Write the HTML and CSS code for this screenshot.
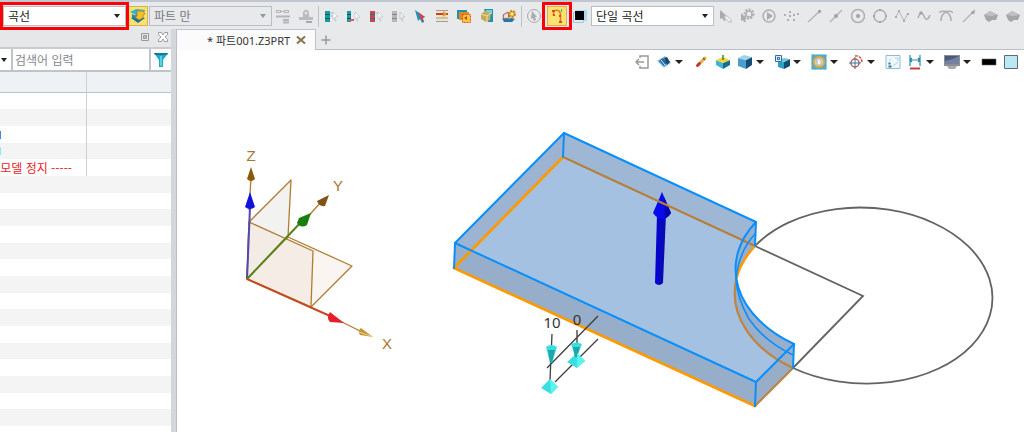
FILE: index.html
```html
<!DOCTYPE html>
<html lang="ko">
<head>
  <meta charset="UTF-8">
  <meta name="viewport" content="width=device-width, initial-scale=1.0">
  <title>파트001.Z3PRT</title>
  <link rel="stylesheet" href="styles.css">
</head>
<body>
  <header class="toolbar">
    <div class="marked">
      <div class="combo">
        <select aria-label="필터"><option>곡선</option></select>
      </div>
    </div>
    <button class="tool active first" aria-label="형상 필터">
      <svg viewBox="0 0 16 16"><path d="M1 10l5-3 9 3-7 5z" fill="#1673a8"/><path d="M0 4l6-3 9 1-1 3-6 3z" fill="#31b3d6"/><path d="M2 6l4 2v3l-4-2z" fill="#2186b3"/><path d="M7 3l6 0 2 3-2 1v3l-4 2-4-3 2-1z" fill="#f9bf20" stroke="#9b7415" stroke-width=".6"/></svg>
    </button>
    <div class="combo disabled">
      <select aria-label="범위" disabled><option>파트 만</option></select>
    </div>
    <div class="group pair">
      <button class="tool" aria-label="링크"><svg viewBox="0 0 16 16" fill="none" stroke="#b3b5b8"><rect x="1.500" y="2.500" width="4" height="2"/><rect x="9.500" y="2.500" width="4" height="2"/><path d="M5 3.500h5"/><path d="M1 8.500h14M8 12h6M8 14.500h6" stroke-width="1.800"/></svg></button>
      <button class="tool" aria-label="스탬프"><svg viewBox="0 0 16 16" fill="#b9bbbe"><path d="M1 9h4V4q3-5 6 0v5h4v3H1z"/><path d="M8 13h6v2H8z" fill="#a6a8ab"/><circle cx="8" cy="5" r="1.500" fill="#e0e1e3"/></svg></button>
    </div>
    <span class="sep"></span>
    <div class="group picks">
      <button class="tool" aria-label="목록 선택"><svg viewBox="0 0 16 16"><path d="M2 3h5v3H2zM2 7h5v3H2zM2 11h5v3H2z" fill="#159da5"/><path d="M2 6.500h5M2 10.500h5" stroke="#17505d"/><path d="M7 5h4M7 8h3" stroke="#8bcdb0"/><path d="M10 4l5 5-3 0 1 4-1 0-1-3-1 1z" fill="#fff" stroke="#b3c1cb" stroke-width=".7"/></svg></button>
      <button class="tool" aria-label="목록 추가"><svg viewBox="0 0 16 16"><path d="M2 3h4v3H2zM2 7h4v3H2zM2 11h4v3H2z" fill="#159da5"/><path d="M2 6.500h4M2 10.500h4" stroke="#17505d"/><path d="M4 12h5" stroke="#df5858" stroke-width="2"/><path d="M10 4l5 5-3 0 1 4-1 0-1-3-1 1z" fill="#fff" stroke="#b3c1cb" stroke-width=".7"/></svg></button>
      <button class="tool" aria-label="목록 제거"><svg viewBox="0 0 16 16"><path d="M2 3h5v3H2zM2 7h5v3H2zM2 11h5v3H2z" fill="#c8464f"/><path d="M2 6.500h5M2 10.500h5" stroke="#1c7480"/><path d="M7 5h3" stroke="#8bcdb0"/><path d="M10 4l5 5-3 0 1 4-1 0-1-3-1 1z" fill="#fff" stroke="#b3c1cb" stroke-width=".7"/></svg></button>
      <button class="tool" aria-label="목록 지우기"><svg viewBox="0 0 16 16"><path d="M2 3h5v3H2zM2 7h5v3H2zM2 11h5v3H2z" fill="#b5b7ba"/><path d="M2 6.500h5M2 10.500h5" stroke="#85878a"/><path d="M10 4l5 5-3 0 1 4-1 0-1-3-1 1z" fill="#f2f2f2" stroke="#bbb" stroke-width=".7"/></svg></button>
      <button class="tool" aria-label="선택"><svg viewBox="0 0 16 16"><path d="M3 2l3 11 2-2 2 4 2-1-1-4 2-1z" fill="#1698bb"/><path d="M6 4l7 5-3 1 2 4-1 0-3-4z" fill="#dc3e48"/></svg></button>
      <button class="tool" aria-label="속성 선택"><svg viewBox="0 0 16 16"><path d="M2 2h12v12H2z" fill="#efe4c8"/><path d="M2 2.500h12M2 13.500h12M2 10h12" stroke="#a09e98"/><path d="M2 6h12" stroke="#cf3b2c" stroke-width="2"/><path d="M9 3l4 3-4 3z" fill="#d99a22"/></svg></button>
      <button class="tool" aria-label="면 선택"><svg viewBox="0 0 16 16"><path d="M1 2h10v9H1z" fill="#1b91b5"/><path d="M3 4h10v8H3z" fill="#e08a1e"/><path d="M6.500 6.500h8v8h-8z" fill="#fbc53a" stroke="#d5572c" stroke-dasharray="2 1"/><path d="M8 10l3-2v4z" fill="#c93d26"/></svg></button>
      <button class="tool" aria-label="솔리드 선택"><svg viewBox="0 0 16 16"><path d="M5 1h9v13H9z" fill="#1e91b4"/><path d="M7 2h6v4H7z" fill="#7fd0dd"/><path d="M2 6l4-3 6 2-1 7-4 2-5-3z" fill="#c3ad58"/><path d="M2 6l6 2 4-3M8 8v6" stroke="#ece0a1" fill="none"/></svg></button>
      <button class="tool" aria-label="스케치 설정"><svg viewBox="0 0 16 16"><path d="M1 10q5 2 9 0l4 1-3 3H3z" fill="#2578a1"/><path d="M2 7l5-3 1 6-5 1z" fill="#e3e0e2" stroke="#a05a55"/><circle cx="11" cy="6" r="3" fill="#f0bb3d" stroke="#cb8317" stroke-width="2" stroke-dasharray="2 1"/><circle cx="11" cy="6" r="1" fill="#fff"/></svg></button>
    </div>
    <span class="sep"></span>
    <button class="tool" aria-label="픽"><svg viewBox="0 0 16 16"><circle cx="8" cy="8" r="6.500" fill="none" stroke="#a9abae"/><path d="M6 3l5 6-2 0 1 3-2 1-1-3-2 1z" fill="#a9abae"/></svg></button>
    <div class="marked tight">
      <button class="tool active" aria-label="연결 곡선"><svg viewBox="0 0 16 16"><path d="M4.500 8V3.500Q11 0 11.500 7V14" fill="none" stroke="#dd7b25" stroke-width="1.500"/><path d="M3 2h3v2H3zM4 6h2v2H4zM10 13h3v2h-3zM10 7h2v2h-2z" fill="#d3502b"/><path d="M12.500 1v3" stroke="#3fae91"/></svg></button>
    </div>
    <button class="tool swatch" aria-label="색상"><svg viewBox="0 0 16 16"><path d="M4 2h11v11H4z" fill="#a8dcf4"/><path d="M1.500 4.500h10v10h-10z" fill="#d6effa" stroke="#a1c8df"/><path d="M3 3h9v9H3z"/></svg></button>
    <div class="combo">
      <select aria-label="선택 방식"><option>단일 곡선</option></select>
    </div>
    <div class="group snaps">
      <button class="tool" aria-label="지우개"><svg viewBox="0 0 16 16"><path d="M3 2l7 6-3 1 2 3-2 1-2-3-2 1z" fill="#a9abae"/><path d="M9 9l4 4" stroke="#c9cbce" stroke-width="4" stroke-linecap="round"/><path d="M9 9l4 4" stroke="#f3f3f3" stroke-width="2"/></svg></button>
      <button class="tool" aria-label="스냅 설정"><svg viewBox="0 0 16 16"><circle cx="10" cy="6" r="4" fill="none" stroke="#b0b2b5" stroke-width="3" stroke-dasharray="2 1"/><circle cx="10" cy="6" r="3" fill="none" stroke="#a9abae"/><path d="M2 5l6 6-2 0 1 3-2 0-1-2-2 1z" fill="#a9abae"/></svg></button>
      <button class="tool" aria-label="실행"><svg viewBox="0 0 16 16"><circle cx="8" cy="8" r="6" fill="none" stroke="#aeb0b3" stroke-width="1.500"/><path d="M6 4l6 4-6 4z" fill="#a9abae"/></svg></button>
      <button class="tool" aria-label="점"><svg viewBox="0 0 16 16" fill="#adafb2"><path d="M1 6h2v2H1zM6 3h2v2H6zM6 7h2v2H6zM4 11h2v2H4zM10 11h2v2h-2zM10 6h2v2h-2zM14 5h2v2h-2z"/></svg></button>
      <button class="tool" aria-label="끝점"><svg viewBox="0 0 16 16"><path d="M2 14L14 3" stroke="#b3b5b8" stroke-width="1.500"/><circle cx="13.500" cy="3.500" r="1.700" fill="#a1a3a6"/></svg></button>
      <button class="tool" aria-label="중간점"><svg viewBox="0 0 16 16"><path d="M2 14L14 2" stroke="#b3b5b8" stroke-width="1.500"/><circle cx="8" cy="8" r="2" fill="#a1a3a6"/></svg></button>
      <button class="tool" aria-label="중심"><svg viewBox="0 0 16 16"><circle cx="8" cy="8" r="6.500" fill="none" stroke="#adafb2" stroke-width="1.500"/><circle cx="8" cy="8" r="2" fill="#a1a3a6"/></svg></button>
      <button class="tool" aria-label="사분점"><svg viewBox="0 0 16 16"><circle cx="8" cy="8" r="6" fill="none" stroke="#adafb2" stroke-width="1.500"/><path d="M7 1h2v2H7zM7 13h2v2H7zM1 7h2v2H1zM13 7h2v2h-2z" fill="#a1a3a6"/></svg></button>
      <button class="tool" aria-label="제어점"><svg viewBox="0 0 16 16"><path d="M2 9l3-6 5 10 4-8" fill="none" stroke="#b3b5b8"/><path d="M4 2h2v2H4zM9 12h2v2H9zM1 8h2v2H1zM13 5h2v2h-2z" fill="#a9abae"/></svg></button>
      <button class="tool" aria-label="곡선점"><svg viewBox="0 0 16 16"><path d="M2 10Q5 1 8 8T14 7" fill="none" stroke="#adafb2" stroke-width="1.500"/><circle cx="5" cy="5" r="1.700" fill="#a1a3a6"/></svg></button>
      <button class="tool" aria-label="접점"><svg viewBox="0 0 16 16"><path d="M1 4.500q3-2 7-1 4-1 7 1M3 13q0-7 5-9 5 2 5 9" fill="none" stroke="#adafb2" stroke-width="1.500"/></svg></button>
      <button class="tool" aria-label="선상점"><svg viewBox="0 0 16 16"><path d="M2 14L14 2" stroke="#b3b5b8" stroke-width="1.500"/><circle cx="12" cy="4.500" r="1.700" fill="#a1a3a6"/></svg></button>
      <button class="tool" aria-label="면 위"><svg viewBox="0 0 16 16"><path d="M1 7l6-4 8 4-2 5-4 0-3 2-3-2z" fill="#a4a6a9"/><path d="M2 7l5-4 7 4-6 1z" fill="#bfc1c4"/></svg></button>
      <button class="tool" aria-label="면 교차"><svg viewBox="0 0 16 16"><path d="M1 7l6-4 8 4-2 5-4 0-3 2-3-2z" fill="#a4a6a9"/><path d="M2 7l5-4 7 4-6 1z" fill="#bfc1c4"/></svg></button>
    </div>
  </header>

  <div class="workspace">
    <aside class="manager">
      <div class="manager-title">
        <button aria-label="고정"><svg viewBox="0 0 10 10" fill="none" stroke="#96999d"><path d="M1.500 1.500h7v7h-7zM3.500 3.500h3v3h-3zM3 5h4"/></svg></button>
        <button aria-label="닫기"><svg viewBox="0 0 10 10" fill="#fff" stroke="#85888c" stroke-width=".8"><path d="M.5.5h3L5 3 6.500.5h3v2L7 5l2.500 2.500v2h-3L5 7 3.500 9.500h-3v-2L3 5 .5 2.500z"/></svg></button>
      </div>
      <div class="search">
        <button class="search-type" aria-label="검색 유형"></button>
        <input type="text" placeholder="검색어 입력" aria-label="검색어 입력">
        <button class="filter" aria-label="필터"><svg viewBox="0 0 16 16"><path d="M1 1h14L10 8v7H6V8z" fill="#1ba9cd"/><path d="M1 1h14l-1 2H2z" fill="#147898"/><path d="M8 4v10" stroke="#5cd0e5" stroke-width="2"/></svg></button>
      </div>
      <table class="history">
        <thead><tr><th></th><th></th></tr></thead>
        <tbody>
          <tr><td></td><td></td></tr>
          <tr><td></td><td></td></tr>
          <tr><td><i class="tag sketch"></i></td><td></td></tr>
          <tr><td><i class="tag extrude"></i></td><td></td></tr>
          <tr><td class="stop"><span>모델 정지 -----</span></td><td></td></tr>
        </tbody>
        <tbody class="blank">
          <tr><td colspan="2"></td></tr>
          <tr><td colspan="2"></td></tr>
          <tr><td colspan="2"></td></tr>
          <tr><td colspan="2"></td></tr>
          <tr><td colspan="2"></td></tr>
          <tr><td colspan="2"></td></tr>
          <tr><td colspan="2"></td></tr>
          <tr><td colspan="2"></td></tr>
          <tr><td colspan="2"></td></tr>
          <tr><td colspan="2"></td></tr>
          <tr><td colspan="2"></td></tr>
          <tr><td colspan="2"></td></tr>
          <tr><td colspan="2"></td></tr>
          <tr><td colspan="2"></td></tr>
          <tr><td colspan="2"></td></tr>
          <tr><td colspan="2"></td></tr>
        </tbody>
      </table>
    </aside>

    <main class="document">
      <nav class="tabs">
        <div class="tab">
          <span>* 파트001.Z3PRT</span>
          <button aria-label="탭 닫기"><svg viewBox="0 0 10 10"><path d="M1 1.500l8 7M9 1.500l-8 7" stroke="#88744c" stroke-width="2"/></svg></button>
        </div>
        <button class="new-tab" aria-label="새 탭"><svg viewBox="0 0 10 10"><path d="M5 .5v9M.5 5h9" stroke="#9c9797" stroke-width="1.500"/></svg></button>
      </nav>

      <div class="view-bar">
        <button class="tool" aria-label="나가기"><svg viewBox="0 0 16 16" fill="none" stroke="#9b9b9b" stroke-width="1.500"><path d="M6 4V2h8v12H6v-2M2 8h8M5 5L2 8l3 3"/></svg></button>
        <button class="tool" aria-label="뷰"><svg viewBox="0 0 16 16"><path d="M1 7l8-5 6 7-7 5z" fill="#8bb9d9"/><path d="M3 7l4-3 4 5-3 3z" fill="#20699c"/><path d="M8 4l3-1 3 5-3 3z" fill="#17486f"/><path d="M1 7l7 7 7-5M5 6l4 5" fill="none" stroke="#d8edf8"/></svg></button><i class="drop"></i>
        <button class="tool" aria-label="지우기"><svg viewBox="0 0 16 16"><path d="M6 10l6-6" stroke="#e5b33d" stroke-width="3" stroke-linecap="round"/><path d="M4.500 11.500L6.500 9.500" stroke="#c93431" stroke-width="3" stroke-linecap="round"/><path d="M10 4l2 2" stroke="#815c25" stroke-width="1.500"/></svg></button>
        <button class="tool" aria-label="정면"><svg viewBox="0 0 16 16"><path d="M1 6l7 3v6l-7-4z" fill="#42b3d7"/><path d="M15 6L8 9v6l7-4z" fill="#176c9a"/><path d="M1 6l7-3 7 3-7 3z" fill="#f1d532"/><path d="M8 1v5" stroke="#3c8a34" stroke-width="1.500"/></svg></button>
        <button class="tool" aria-label="음영"><svg viewBox="0 0 16 16"><path d="M1 4l8 2v9l-8-3z" fill="#4b9fce"/><path d="M15 3L9 6v9l6-4z" fill="#174d79"/><path d="M1 4l6-3 8 2-6 3z" fill="#a1d2e8"/></svg></button><i class="drop"></i>
        <button class="tool" aria-label="표시"><svg viewBox="0 0 16 16"><path d="M4 6l6 2v7l-6-2z" fill="#2f9fc5"/><path d="M16 5l-6 3v7l6-3z" fill="#124f73"/><path d="M4 6l6-2 6 1-6 3z" fill="#70c7de"/><path d="M1.500 1.500h6v6h-6z" fill="#dbeef9" stroke="#316d99"/><path d="M3.500 3.500h2v2h-2z" fill="none" stroke="#316d99"/></svg></button><i class="drop"></i>
        <button class="tool" aria-label="맞춤"><svg viewBox="0 0 16 16"><path d="M.5.5h15v15H.5z" fill="#5aa8c8" stroke="#8bcadf" stroke-dasharray="3 2"/><circle cx="8" cy="8" r="5" fill="#d2d9d0" stroke="#dcae38" stroke-width="2"/><path d="M6 5h3l1 1v5H6z" fill="#f5f5ec" stroke="#8e9a9a" stroke-width=".6"/></svg></button><i class="drop"></i>
        <button class="tool" aria-label="회전 중심"><svg viewBox="0 0 16 16" fill="none"><circle cx="7" cy="9" r="4" stroke="#c65a56" stroke-width="1.500"/><path d="M7 3v12M1 9h12" stroke="#397c9b"/><path d="M7 2q6-1 7 6" stroke="#cf4946" stroke-width="1.500" stroke-dasharray="3 1"/></svg></button><i class="drop"></i>
        <button class="tool" aria-label="창"><svg viewBox="0 0 16 16"><path d="M1 1.500h14v13H1z" fill="#f0f8fb" stroke="#91bfd0"/><path d="M3.500 9.500h2M3.500 12.500h3" stroke="#2878a0" stroke-width="2"/><path d="M8 12l5-4M10 4h3v3M6 5l-2 2" fill="none" stroke="#a7d5e3"/></svg></button>
        <button class="tool" aria-label="치수"><svg viewBox="0 0 16 16"><path d="M3 1v11M13 1v11M3 6h10M5 4L3 6l2 2M11 4l2 2-2 2" fill="none" stroke="#258daa" stroke-width="1.200"/><path d="M3 14.500h10" stroke="#ca3e43" stroke-width="2"/></svg></button><i class="drop"></i>
        <button class="tool" aria-label="디스플레이"><svg viewBox="0 0 16 16"><path d="M0 1h16v11H0z" fill="#8b9097"/><path d="M1 2h14v8H1z" fill="#4c5b7b"/><path d="M1 7q7-1 14-5v8H1z" fill="#7482a0"/><path d="M3 12h10l-2 3H5z" fill="#aaa"/></svg></button><i class="drop"></i>
        <button class="tool" aria-label="선 색상"><svg viewBox="0 0 16 16"><path d="M1 5h14v6H1z" stroke="#666" stroke-width=".6"/></svg></button>
        <button class="tool" aria-label="배경 색상"><svg viewBox="0 0 16 16"><path d="M1.500 1.500h13v13h-13z" fill="#bce7f5" stroke="#626a6e"/></svg></button>
      </div>

      <svg class="scene" viewBox="177 74 847 358" preserveAspectRatio="xMinYMin meet">
        <!-- datum planes -->
        <g stroke="#b07c30" stroke-width="1.300" stroke-linejoin="round">
          <path d="M247 279L249 222L291 180L288 237Z" fill="#e9e9e6" fill-opacity=".6"/>
          <path d="M247 279L288 237L352 266L311 307Z" fill="#f6efe8" fill-opacity=".6"/>
          <path d="M247 279L249 222L313 251L311 307Z" fill="#f2e6df" fill-opacity=".6"/>
          <path d="M249 210L251 178M303 222L322 201M340 321L364 333" fill="none"/>
        </g>
        <!-- axes -->
        <path d="M247 279L250 207" stroke="#5548ac" stroke-width="2"/>
        <path d="M247 279L303 220" stroke="#568217" stroke-width="2"/>
        <path d="M247 279L330 316" stroke="#c34b22" stroke-width="2"/>
        <path d="M250 192L255 207Q250 211 245 207Z" fill="#1212dd"/>
        <path d="M251 167L255 179Q251 183 247 179Z" fill="#8d5909"/>
        <path d="M311 213L307 225Q301 229 297 223L299 218Z" fill="#17800d"/>
        <path d="M329 195L325 206Q319 207 317 201Z" fill="#825315"/>
        <path d="M344 323L330 322Q326 318 330 312Z" fill="#e51f27"/>
        <path d="M373 337L360 335Q357 331 361 328Z" fill="#c4943c"/>
        <path d="M373 337L359 332" stroke="#f2d680"/>
        <g class="axis-name">
          <text x="251" y="161">Z</text>
          <text x="338" y="191">Y</text>
          <text x="387" y="349">X</text>
        </g>

        <!-- sketch -->
        <g fill="none" stroke="#636363" stroke-width="1.800">
          <path d="M755 246A129 88 2 1 1 793 368"/>
          <path d="M755 246L863 296L793 368"/>
        </g>

        <!-- extruded body -->
        <path d="M563 157L755 246A129 88 2 0 0 793 368L755 406L454 268Z" fill="#a5c1e2"/>
        <path d="M564 133L756 222A129 88 2 0 0 794 344L756 382L455 243Z" fill="#a5c1e2"/>
        <path d="M564 133L756 222L755 246L563 157Z" fill="#9eb7d5"/>
        <path d="M564 133L563 157L454 268L455 243Z" fill="#9db3d2"/>
        <path d="M455 243L756 382L755 406L454 268Z" fill="#97aeca"/>
        <path d="M756 382L794 344L793 368L755 406Z" fill="#98adc8"/>
        <path d="M756 222A129 88 2 0 0 794 344L793 368A129 88 2 0 1 755 246Z" fill="#98afcc"/>

        <!-- direction handle -->
        <path d="M657 214H666L663 283Q659 287 655 283Z" fill="#0909ba"/>
        <path d="M659 216L657 284" stroke="#0303dc" stroke-width="2"/>
        <path d="M662 192L671 213Q662 225 653 213Z" fill="#0909ee"/>
        <path d="M664 197L671 213Q668 218 665 218Z" fill="#0505ac"/>

        <g fill="none" stroke-linejoin="round" stroke-linecap="round">
          <path d="M563 157L755 246" stroke="#b67f38" stroke-width="2"/>
          <path d="M563 157L454 268L755 406" stroke="#ff9900" stroke-width="2.800"/>
          <path d="M755 406L793 368A129 88 2 0 1 736 281" stroke="#bd8540" stroke-width="2.200"/>
          <path d="M755 246Q740 262 736 280" stroke="#ff9900" stroke-width="2.500"/>
          <g stroke="#098ffb" stroke-width="2">
            <path d="M564 133L756 222A129 88 2 0 0 794 344L756 382L455 243Z"/>
            <path d="M564 133L563 157M455 243L454 268M756 382L755 406M794 344L793 368M756 222L755 246"/>
            <path d="M755 234Q739 251 736 279Q737 298 749 319Q765 342 793 355" stroke-width="1.600"/>
          </g>
        </g>

        <!-- depth handles -->
        <g stroke="#3e3e3e" stroke-width="1.300">
          <path d="M552 334L550 380M577 330V346M547 368L598 316M555 382L598 339"/>
        </g>
        <g fill="#39dfe0">
          <path d="M546 347Q551 343 557 347L552 363H550Z"/>
          <path d="M571 344Q576 341 582 344L577 357H575Z"/>
          <path d="M550 379L558 387L551 394L541 388Z"/>
          <path d="M577 353L585 361L577 368L567 362Z"/>
        </g>
        <g fill="#1fa6aa">
          <path d="M548 350L555 350L552 363H550ZM573 347L580 347L577 357H575Z"/>
          <path d="M550 379L558 387L551 394ZM577 353L585 361L577 368Z" fill="#58f5ef"/>
        </g>
        <g class="depth">
          <text x="552" y="328">10</text>
          <text x="577" y="325">0</text>
        </g>
      </svg>
    </main>
  </div>
</body>
</html>
```

FILE: styles.css
```css
*, *::before, *::after {
  box-sizing: border-box;
}

body, html {
  margin: 0;
  height: 100%;
}

body {
  display: flex;
  flex-direction: column;
  overflow: hidden;
  background-color: #e8e9eb;
  font-family: "Liberation Sans", "Noto Sans CJK KR", sans-serif;
  font-size: 12px;
  color: #333;
}

button {
  padding: 0;
  border: none;
  background: none;
  display: flex;
  align-items: center;
  justify-content: center;
}

/* top toolbar */
.toolbar {
  display: flex;
  align-items: center;
  flex: none;
  height: 29px;
  padding-left: 3px;
  padding-top: 1px;
  border-top: 2px solid #c0c7d0;
}

.marked {
  position: relative;
  z-index: 1;
  flex: none;
  padding: 1px 0;
  outline: 3px solid #fb0007;
}

.marked.tight {
  padding: 1px 2px;
}

.combo {
  position: relative;
  flex: none;
  width: 123px;
  height: 20px;
}

.combo select {
  appearance: none;
  width: 100%;
  height: 100%;
  padding: 0 16px 2px 4px;
  border: 1px solid #b9bec6;
  border-radius: 0;
  background-color: white;
  font: 12px "Noto Sans CJK KR", sans-serif;
  color: #222;
  opacity: 1;
}

.combo::after,
.search-type::after {
  content: "";
  border: 3px solid transparent;
  border-top: 4px solid #222;
  border-bottom: none;
}

.combo::after {
  position: absolute;
  right: 6px;
  top: 8px;
  pointer-events: none;
}

.combo.disabled select {
  background-color: #e8e9eb;
  color: #77797c;
}

.combo.disabled::after {
  border-top-color: #96989b;
}

.tool {
  flex: none;
  width: 22px;
  height: 20px;
}

.tool svg {
  flex: none;
  width: 16px;
  height: 16px;
}

.tool.active {
  width: 20px;
  border: 1px solid #d5b34f;
  background-color: #fde16f;
}

.tool.first {
  margin: 0 1px 0 2px;
}

.group {
  display: flex;
}

.group .tool {
  flex: 1;
}

.pair {
  width: 45px;
}

.picks {
  width: 200px;
}

.snaps {
  flex: 1;
}

.sep {
  flex: none;
  width: 1px;
  height: 21px;
  margin: 0 1px;
  background-color: #bfc2c7;
}

/* left manager */
.workspace {
  display: flex;
  flex: 1;
  min-height: 0;
}

.manager {
  flex: none;
  width: 176px;
  overflow: hidden;
  border-right: 5px solid #d3d7dc;
  background-color: white;
}

.manager-title {
  display: flex;
  justify-content: flex-end;
  align-items: center;
  gap: 8px;
  height: 20px;
  padding: 0 3px 3px 0;
  border-bottom: 2px solid #c8ccd2;
  background-color: #e6e7e9;
}

.manager-title svg,
.tabs svg {
  display: block;
  width: 10px;
  height: 10px;
}

.search {
  display: flex;
  height: 23px;
  border-bottom: 2px solid #bfc4cb;
}

.search-type {
  width: 11px;
}

.search-type::after {
  margin-right: 4px;
}

.search input {
  flex: 1;
  min-width: 0;
  padding: 0 2px;
  border: solid #bfc4cb;
  border-width: 0 2px;
  outline: none;
  font: 12px "Noto Sans CJK KR", sans-serif;
}

.search input::placeholder {
  color: #85878a;
}

.filter {
  width: 20px;
}

.filter svg {
  width: 16px;
  height: 16px;
}

.history {
  width: 100%;
  table-layout: fixed;
  border-collapse: separate;
  border-spacing: 0;
}

.history th,
.history td {
  padding: 0;
  line-height: 16px;
}

.history th {
  height: 21px;
  border-bottom: 1px solid #bdc3ca;
  background-color: #eef2f5;
}

.history th:first-child {
  width: 87px;
}

.history tr > :first-child:not([colspan]) {
  border-right: 1px solid #ccd0d8;
}

.history td {
  height: 17px;
}

/* 50px for every three rows */
.history tbody:not(.blank) tr:nth-child(3n+1) td,
.history .blank tr:nth-child(3n+2) td {
  height: 16px;
}

.history tbody tr:nth-child(even),
.history .blank tr:nth-child(odd) {
  background-color: #f4f4f4;
}

.history .blank tr:nth-child(even) {
  background-color: white;
}

.stop span {
  display: flex;
  justify-content: flex-end;
  height: 16px;
  padding-right: 14px;
  white-space: nowrap;
  font-family: "Noto Sans CJK KR", sans-serif;
  color: #ee2028;
}

.tag {
  display: block;
  width: 1px;
  height: 8px;
  background-color: #8ceaf2;
}

.tag.sketch {
  background-color: #3f87d8;
}

/* document area */
.document {
  display: flex;
  flex-direction: column;
  flex: 1;
  min-width: 0;
  border-left: 1px solid #b9bfca;
  background-color: white;
}

.tabs {
  display: flex;
  height: 21px;
  background-color: #e8e9eb;
  box-shadow: inset 0 -1px #b9bfca;
}

.tab {
  display: flex;
  align-items: center;
  gap: 6px;
  width: 139px;
  padding: 0 14px 0 30px;
  border: solid #bfc4cc;
  border-width: 1px 1px 0 0;
  background-color: #fbfbfc;
  font: 11px "Noto Sans", "Noto Sans CJK KR", sans-serif;
  white-space: nowrap;
}

.tab span {
  flex: 1;
}

.new-tab {
  width: 20px;
}

.view-bar {
  display: flex;
  align-items: center;
  justify-content: flex-end;
  height: 24px;
  padding-right: 2px;
}

.drop {
  width: 15px;
}

.drop::before {
  content: "";
  display: block;
  width: 8px;
  border: 4px solid transparent;
  border-top-color: #222;
  border-bottom: none;
}

.scene {
  display: block;
  width: 100%;
}

.axis-name {
  font: 15px "Liberation Sans", sans-serif;
  text-anchor: middle;
  fill: #a8752b;
}

.depth {
  font: 15px "Noto Sans", sans-serif;
  text-anchor: middle;
  fill: #333;
}
```
